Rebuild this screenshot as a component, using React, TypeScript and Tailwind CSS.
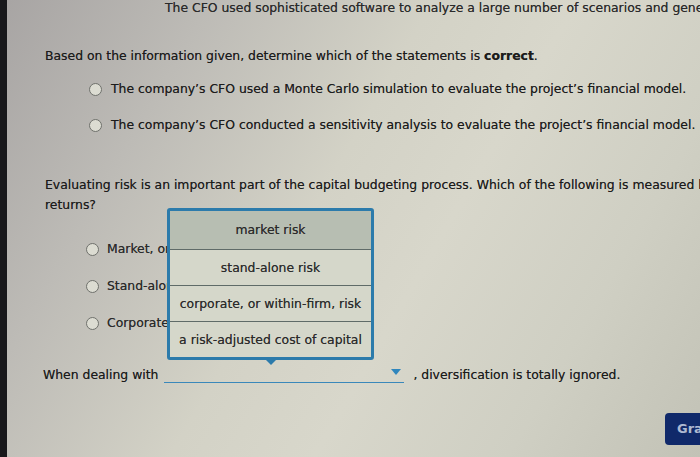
import React from 'react';

const font = { fontFamily: '"DejaVu Sans", Verdana, sans-serif' };

function Radio({ className = '' }: { className?: string }) {
  return (
    <span
      className={`inline-block h-[13px] w-[13px] shrink-0 rounded-full border-[1.5px] border-[#6f716c] bg-[#dcdcd2] ${className}`}
    />
  );
}

const options = [
  { label: 'market risk', active: true },
  { label: 'stand-alone risk', active: false },
  { label: 'corporate, or within-firm, risk', active: false },
  { label: 'a risk-adjusted cost of capital', active: false },
];

export default function App() {
  return (
    <div
      className="relative flex h-[457px] w-[700px] overflow-hidden text-[12.4px] text-[#1c1c1c] [text-shadow:0_0_0.6px_rgba(0,0,0,0.55)] bg-[linear-gradient(120deg,#a7a4a3_0%,#bdbbb6_22%,#d3d2c6_45%,#d8d7cb_60%,#cfcfc3_80%,#c2c2b6_100%)]"
      style={font}
    >
      {/* screen bezel */}
      <div className="w-[7px] shrink-0 bg-[#18181b]" />

      <div className="min-w-0 flex-1 pl-[38px]">
        {/* cut-off previous line */}
        <div className="-mt-[2px] ml-[120px] h-[20px] whitespace-nowrap leading-[20px] text-[#2a2a2a]">
          The CFO used sophisticated software to analyze a large number of scenarios and generate estimates
        </div>

        <p className="mt-[30px] whitespace-nowrap leading-[16px]">
          Based on the information given, determine which of the statements is <b>correct</b>.
        </p>

        <div className="ml-[44px] mt-[17px] flex flex-col gap-[20px]">
          <label className="flex items-center gap-[9px] whitespace-nowrap leading-[16px]">
            <Radio />
            <span>The company’s CFO used a Monte Carlo simulation to evaluate the project’s financial model.</span>
          </label>
          <label className="flex items-center gap-[9px] whitespace-nowrap leading-[16px]">
            <Radio />
            <span>The company’s CFO conducted a sensitivity analysis to evaluate the project’s financial model.</span>
          </label>
        </div>

        <p className="mt-[42px] whitespace-nowrap leading-[20px]">
          Evaluating risk is an important part of the capital budgeting process. Which of the following is measured by
          a project’s expected
          <br />
          returns?
        </p>

        <div className="relative">
          <div className="ml-[41px] mt-[26px] flex flex-col gap-[21px]">
            <label className="flex items-center gap-[8px] leading-[16px] text-[#2a2a2a]">
              <Radio />
              <span>Market, or beta, risk</span>
            </label>
            <label className="flex items-center gap-[8px] leading-[16px] text-[#2a2a2a]">
              <Radio />
              <span>Stand-alone risk</span>
            </label>
            <label className="flex items-center gap-[8px] leading-[16px] text-[#2a2a2a]">
              <Radio />
              <span>Corporate, or within-firm, risk</span>
            </label>
          </div>

          {/* open dropdown menu */}
          <div className="absolute left-[122px] -top-[33px] w-[207px] rounded-[3px] border-[3px] border-[#2c7bab] bg-[#d5d7ca] text-[#2b2b2b]">
            {options.map((o, i) => (
              <div
                key={o.label}
                className={`flex items-center justify-center whitespace-nowrap leading-[16px] ${
                  i === 0 ? 'h-[38px] bg-[#b7beb2]' : 'h-[36px] border-t border-[#5f6b68]'
                }`}
              >
                {o.label}
              </div>
            ))}
            <span className="absolute -bottom-[8px] left-[95px] h-0 w-0 border-x-[6px] border-t-[6px] border-x-transparent border-t-[#2c7bab]" />
          </div>
        </div>

        {/* fill-in-the-blank */}
        <div className="-ml-[2px] mt-[36px] flex items-end whitespace-nowrap leading-[16px]">
          <span>When dealing with</span>
          <span className="relative ml-[6px] h-[16px] w-[240px] border-b border-[#3a88ba]">
            <span className="absolute right-[3px] top-[2px] h-0 w-0 border-x-[5px] border-t-[6px] border-x-transparent border-t-[#2f86bd]" />
          </span>
          <span className="ml-[9px]">, diversification is totally ignored.</span>
        </div>

        <div className="mt-[30px] flex">
          <button className="ml-[620px] h-[32px] w-[90px] shrink-0 whitespace-nowrap rounded-[4px] bg-[#10296a] pl-[12px] text-left text-[13px] font-bold text-[#aeb9d2]">
            Grade it now
          </button>
        </div>
      </div>
    </div>
  );
}
